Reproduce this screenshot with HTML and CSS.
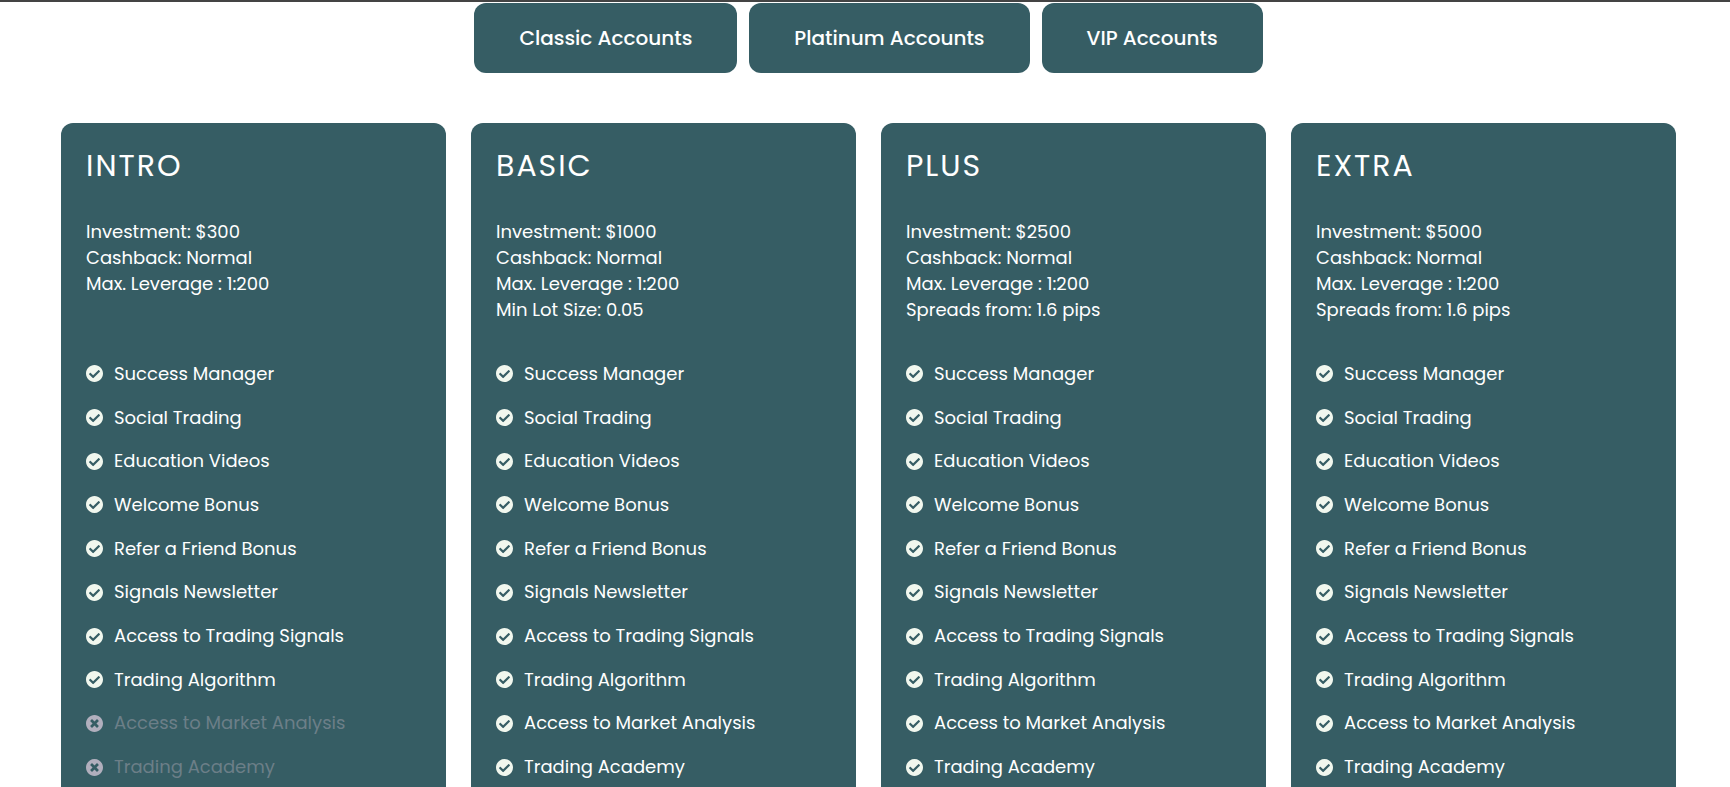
FILE: index.html
```html
<!DOCTYPE html>
<html lang="en">
<head>
<meta charset="utf-8">
<title>Accounts</title>
<link rel="stylesheet" href="styles.css">
</head>
<body>
<svg class="sprite" aria-hidden="true">
  <symbol id="check" viewBox="8 8 496 496"><path d="M504 256c0 136.967-111.033 248-248 248S8 392.967 8 256 119.033 8 256 8s248 111.033 248 248zM227.314 387.314l184-184c6.248-6.248 6.248-16.379 0-22.627l-22.627-22.627c-6.248-6.249-16.379-6.249-22.628 0L216 308.118l-70.059-70.059c-6.248-6.248-16.379-6.248-22.628 0l-22.627 22.627c-6.248 6.248-6.248 16.379 0 22.627l104 104c6.249 6.249 16.379 6.249 22.628.001z"/></symbol>
  <symbol id="cross" viewBox="8 8 496 496"><path d="M256 8C119 8 8 119 8 256s111 248 248 248 248-111 248-248S393 8 256 8zm121.600 313.100c4.700 4.700 4.700 12.300 0 17L338 377.600c-4.700 4.700-12.300 4.700-17 0L256 312l-65.100 65.600c-4.700 4.700-12.300 4.700-17 0L134.400 338c-4.700-4.700-4.700-12.300 0-17l65.600-65-65.600-65.100c-4.700-4.700-4.700-12.300 0-17l39.600-39.600c4.700-4.700 12.300-4.700 17 0l65 65.700 65.100-65.600c4.700-4.700 12.300-4.700 17 0l39.600 39.600c4.700 4.700 4.700 12.300 0 17L312 256l65.600 65.100z"/></symbol>
</svg>
<main class="page">
  <div class="tabs">
    <button class="tab" type="button">Classic Accounts</button>
    <button class="tab" type="button">Platinum Accounts</button>
    <button class="tab" type="button">VIP Accounts</button>
  </div>
  <div class="plans">
    <section class="plan">
      <h2 class="plan-name">INTRO</h2>
      <p class="terms">Investment: $300<br>Cashback: Normal<br>Max. Leverage : 1:200</p>
      <ul class="features">
        <li class="feature"><svg class="icon"><use href="#check"/></svg>Success Manager</li>
        <li class="feature"><svg class="icon"><use href="#check"/></svg>Social Trading</li>
        <li class="feature"><svg class="icon"><use href="#check"/></svg>Education Videos</li>
        <li class="feature"><svg class="icon"><use href="#check"/></svg>Welcome Bonus</li>
        <li class="feature"><svg class="icon"><use href="#check"/></svg>Refer a Friend Bonus</li>
        <li class="feature"><svg class="icon"><use href="#check"/></svg>Signals Newsletter</li>
        <li class="feature"><svg class="icon"><use href="#check"/></svg>Access to Trading Signals</li>
        <li class="feature"><svg class="icon"><use href="#check"/></svg>Trading Algorithm</li>
        <li class="feature off"><svg class="icon"><use href="#cross"/></svg>Access to Market Analysis</li>
        <li class="feature off"><svg class="icon"><use href="#cross"/></svg>Trading Academy</li>
      </ul>
    </section>
    <section class="plan">
      <h2 class="plan-name">BASIC</h2>
      <p class="terms">Investment: $1000<br>Cashback: Normal<br>Max. Leverage : 1:200<br>Min Lot Size: 0.05</p>
      <ul class="features">
        <li class="feature"><svg class="icon"><use href="#check"/></svg>Success Manager</li>
        <li class="feature"><svg class="icon"><use href="#check"/></svg>Social Trading</li>
        <li class="feature"><svg class="icon"><use href="#check"/></svg>Education Videos</li>
        <li class="feature"><svg class="icon"><use href="#check"/></svg>Welcome Bonus</li>
        <li class="feature"><svg class="icon"><use href="#check"/></svg>Refer a Friend Bonus</li>
        <li class="feature"><svg class="icon"><use href="#check"/></svg>Signals Newsletter</li>
        <li class="feature"><svg class="icon"><use href="#check"/></svg>Access to Trading Signals</li>
        <li class="feature"><svg class="icon"><use href="#check"/></svg>Trading Algorithm</li>
        <li class="feature"><svg class="icon"><use href="#check"/></svg>Access to Market Analysis</li>
        <li class="feature"><svg class="icon"><use href="#check"/></svg>Trading Academy</li>
      </ul>
    </section>
    <section class="plan">
      <h2 class="plan-name">PLUS</h2>
      <p class="terms">Investment: $2500<br>Cashback: Normal<br>Max. Leverage : 1:200<br>Spreads from: 1.6 pips</p>
      <ul class="features">
        <li class="feature"><svg class="icon"><use href="#check"/></svg>Success Manager</li>
        <li class="feature"><svg class="icon"><use href="#check"/></svg>Social Trading</li>
        <li class="feature"><svg class="icon"><use href="#check"/></svg>Education Videos</li>
        <li class="feature"><svg class="icon"><use href="#check"/></svg>Welcome Bonus</li>
        <li class="feature"><svg class="icon"><use href="#check"/></svg>Refer a Friend Bonus</li>
        <li class="feature"><svg class="icon"><use href="#check"/></svg>Signals Newsletter</li>
        <li class="feature"><svg class="icon"><use href="#check"/></svg>Access to Trading Signals</li>
        <li class="feature"><svg class="icon"><use href="#check"/></svg>Trading Algorithm</li>
        <li class="feature"><svg class="icon"><use href="#check"/></svg>Access to Market Analysis</li>
        <li class="feature"><svg class="icon"><use href="#check"/></svg>Trading Academy</li>
      </ul>
    </section>
    <section class="plan">
      <h2 class="plan-name">EXTRA</h2>
      <p class="terms">Investment: $5000<br>Cashback: Normal<br>Max. Leverage : 1:200<br>Spreads from: 1.6 pips</p>
      <ul class="features">
        <li class="feature"><svg class="icon"><use href="#check"/></svg>Success Manager</li>
        <li class="feature"><svg class="icon"><use href="#check"/></svg>Social Trading</li>
        <li class="feature"><svg class="icon"><use href="#check"/></svg>Education Videos</li>
        <li class="feature"><svg class="icon"><use href="#check"/></svg>Welcome Bonus</li>
        <li class="feature"><svg class="icon"><use href="#check"/></svg>Refer a Friend Bonus</li>
        <li class="feature"><svg class="icon"><use href="#check"/></svg>Signals Newsletter</li>
        <li class="feature"><svg class="icon"><use href="#check"/></svg>Access to Trading Signals</li>
        <li class="feature"><svg class="icon"><use href="#check"/></svg>Trading Algorithm</li>
        <li class="feature"><svg class="icon"><use href="#check"/></svg>Access to Market Analysis</li>
        <li class="feature"><svg class="icon"><use href="#check"/></svg>Trading Academy</li>
      </ul>
    </section>
  </div>
</main>
</body>
</html>
```
FILE: styles.css
```css
* { box-sizing: border-box; }

body {
  margin: 0;
  background: #fff;
  color: #fff;
  font-family: Poppins, Inter, "Open Sans", sans-serif;
  font-size: 18px;
  line-height: 26px;
}

.sprite { display: none; }

.page {
  height: 100vh;
  overflow: hidden;
  border-top: 2px solid #444;
  padding: 1px 54px 0 61px;
}

.tabs {
  display: flex;
  justify-content: center;
  gap: 12px;
}

.tab {
  height: 70px;
  padding: 0 45px;
  border: 0;
  border-radius: 12px;
  background: #365d64;
  color: #fff;
  font: inherit;
  font-size: 20px;
  font-weight: 500;
}

.plans {
  display: grid;
  grid-template-columns: repeat(4, 1fr);
  gap: 25px;
  margin-top: 50px;
}

.plan {
  padding: 25px 25px 40px;
  border-radius: 12px;
  background: #365d64;
}

.plan-name {
  margin: 0;
  font-size: 30px;
  font-weight: 400;
  line-height: 36px;
  letter-spacing: 2px;
}

.terms {
  min-height: 104px;
  margin: 35px 0 29px;
}

.features {
  display: grid;
  grid-template-rows: repeat(10, 1fr);
  min-height: 437px;
  margin: 0;
  padding: 0;
  list-style: none;
}

.feature {
  display: flex;
  align-items: center;
  gap: 11px;
}

.icon {
  flex: none;
  width: 17px;
  height: 17px;
  fill: #f1f7ee;
}

.off { color: #6c7f88; }
.off .icon { fill: #b1afbd; }
```
